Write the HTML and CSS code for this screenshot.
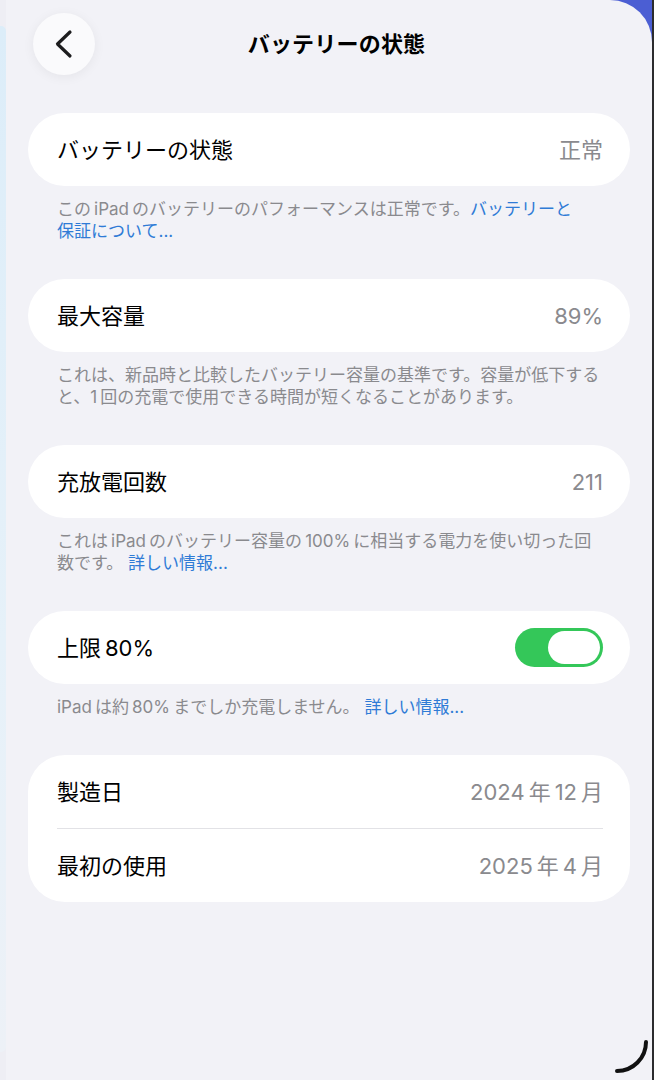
FILE: index.html
```html
<!DOCTYPE html>
<html lang="ja">
<head>
<meta charset="utf-8">
<title>バッテリーの状態</title>
<link rel="stylesheet" href="styles.css">
</head>
<body>
<div class="screen">
  <div class="side"></div>
  <main class="panel">
    <header class="nav">
      <button class="back" aria-label="戻る">
        <svg width="62" height="62" viewBox="0 0 62 62"><path d="M37 19 L24.5 31 L37 43" fill="none" stroke="#1c1c1e" stroke-width="3.2" stroke-linecap="round" stroke-linejoin="round"/></svg>
      </button>
      <h1 class="title">バッテリーの状態</h1>
      <span></span>
    </header>

    <section class="group">
      <div class="card"><div class="row"><span class="label">バッテリーの状態</span><span class="value">正常</span></div></div>
      <p class="note">この&thinsp;iPad&thinsp;のバッテリーのパフォーマンスは正常です。<a class="link">バッテリーと<br>保証について...</a></p>
    </section>

    <section class="group">
      <div class="card"><div class="row"><span class="label">最大容量</span><span class="value">89%</span></div></div>
      <p class="note">これは、新品時と比較したバッテリー容量の基準です。容量が低下する<br>と、1&thinsp;回の充電で使用できる時間が短くなることがあります。</p>
    </section>

    <section class="group">
      <div class="card"><div class="row"><span class="label">充放電回数</span><span class="value">211</span></div></div>
      <p class="note">これは&thinsp;iPad&thinsp;のバッテリー容量の&thinsp;100%&thinsp;に相当する電力を使い切った回<br>数です。 <a class="link">詳しい情報...</a></p>
    </section>

    <section class="group">
      <div class="card"><div class="row"><span class="label">上限&thinsp;80%</span><span class="toggle"><span class="knob"></span></span></div></div>
      <p class="note">iPad&thinsp;は約&thinsp;80%&thinsp;までしか充電しません。 <a class="link">詳しい情報...</a></p>
    </section>

    <section class="group">
      <div class="card">
        <div class="row"><span class="label">製造日</span><span class="value">2024&thinsp;年&thinsp;12&thinsp;月</span></div>
        <div class="divider"></div>
        <div class="row"><span class="label">最初の使用</span><span class="value">2025&thinsp;年&thinsp;4&thinsp;月</span></div>
      </div>
    </section>
  </main>
  <svg class="corner" width="44" height="44" viewBox="0 0 44 44"><path d="M7 36 A29 29 0 0 0 36 7" fill="none" stroke="#111" stroke-width="4" stroke-linecap="round"/></svg>
</div>
</body>
</html>
```

FILE: styles.css
```css
* { box-sizing: border-box; }

html, body {
  margin: 0;
  padding: 0;
  background: #f2f2f7;
}

body {
  font-family: Inter, "Noto Sans CJK JP", "Noto Sans", sans-serif;
  color: #000;
}

.screen {
  position: relative;
  display: flex;
  width: 654px;
  height: 1080px;
  overflow: hidden;
  background: linear-gradient(#4b5ed3, #4b5ed3) top right / 60px 60px no-repeat, #eeeef4;
  border-right: 2px solid #2c2c2e;
}

.side {
  width: 6px;
  margin: 26px 0 28px;
  background: linear-gradient(#dcedf9, #e6f1f9 60%, #edf1f7);
  border-radius: 0 5px 5px 0;
}

.panel {
  flex: 1;
  background: #f2f2f7;
  border-top-right-radius: 42px;
  padding: 0 22px;
}

.nav {
  display: grid;
  grid-template-columns: 62px 1fr 62px;
  align-items: center;
  padding: 13px 0 0 5px;
  margin-bottom: 38px;
}

.back {
  width: 62px;
  height: 62px;
  padding: 0;
  border: none;
  border-radius: 50%;
  background: #fafafc;
  box-shadow: 0 2px 12px rgba(0, 0, 0, 0.06);
  display: flex;
  align-items: center;
  justify-content: center;
}

.back svg { display: block; }

.title {
  margin: 0;
  padding-left: 10px;
  text-align: center;
  font-size: 22px;
  font-weight: 700;
  line-height: 62px;
  letter-spacing: 0.2px;
}

.group {
  margin-bottom: 37px;
}

.card {
  background: #fff;
  border-radius: 37px;
  padding: 0 27px 0 29px;
}

.row {
  height: 73px;
  display: flex;
  align-items: center;
  justify-content: space-between;
}

.label {
  font-size: 22px;
  line-height: 30px;
}

.value {
  font-size: 22px;
  line-height: 30px;
  color: #8a8a8e;
}

.divider {
  height: 1px;
  background: #e2e2e6;
}

.note {
  margin: 0;
  padding: 12px 0 0 29px;
  font-size: 17px;
  line-height: 22px;
  color: #8a8a8e;
}

.link {
  color: #2f7bd6;
  text-decoration: none;
}

.toggle {
  width: 88px;
  height: 39px;
  border-radius: 20px;
  background: #34c759;
  display: flex;
  align-items: center;
  justify-content: flex-end;
  padding: 0 3px;
}

.knob {
  width: 52px;
  height: 33px;
  border-radius: 17px;
  background: #fff;
}

.corner {
  position: absolute;
  left: 610px;
  top: 1035px;
}
```
